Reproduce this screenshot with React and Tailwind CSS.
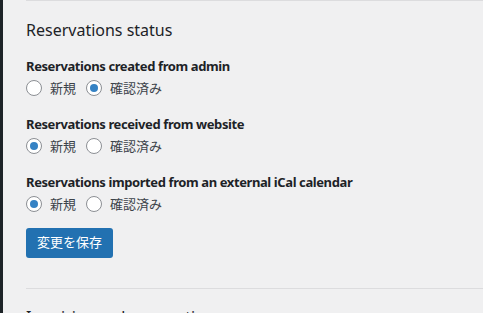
const font = { fontFamily: '"Noto Sans", "Noto Sans CJK JP", sans-serif' }

const Radio = ({ checked, label }) => (
  <label className="flex items-center gap-2 mr-[10px]">
    <span className="w-4 h-4 rounded-full border border-[#8c8f94] bg-white flex items-center justify-center shrink-0">
      {checked && <span className="w-2 h-2 rounded-full bg-[#3582c4]" />}
    </span>
    <span className="text-[13px] leading-none text-[#3c434a]">{label}</span>
  </label>
)

const Group = ({ title, value }) => (
  <div className="mb-[14px]">
    <div className="text-[13px] font-bold tracking-[-0.4px] leading-[22px] text-[#1d2327]">{title}</div>
    <div className="flex items-center h-[22px]">
      <Radio checked={value === 'new'} label="新規" />
      <Radio checked={value === 'confirmed'} label="確認済み" />
    </div>
  </div>
)

export default function App() {
  return (
    <div className="flex w-[483px] h-[313px] overflow-hidden bg-[#f0f0f1]" style={font}>
      <div className="w-[3px] bg-[#1d2327] shrink-0" />
      <div className="flex-1 pl-[23px]">
        <div className="border-t border-[#dcdcde]">
          <h2 className="text-[16px] font-normal text-[#1d2327] leading-[24px] mt-[17px] mb-[13px]">Reservations status</h2>
          <Group title="Reservations created from admin" value="confirmed" />
          <Group title="Reservations received from website" value="new" />
          <Group title="Reservations imported from an external iCal calendar" value="new" />
          <button className="-mt-[2px] h-[30px] px-[11px] rounded-[3px] bg-[#2271b1] text-white text-[13px] leading-none">変更を保存</button>
          <div className="mt-[30px] border-t border-[#dcdcde] pt-[16px]">
            <h2 className="text-[16px] font-normal text-[#1d2327] leading-[24px]">Inquiries and reservation sync</h2>
          </div>
        </div>
      </div>
    </div>
  )
}
